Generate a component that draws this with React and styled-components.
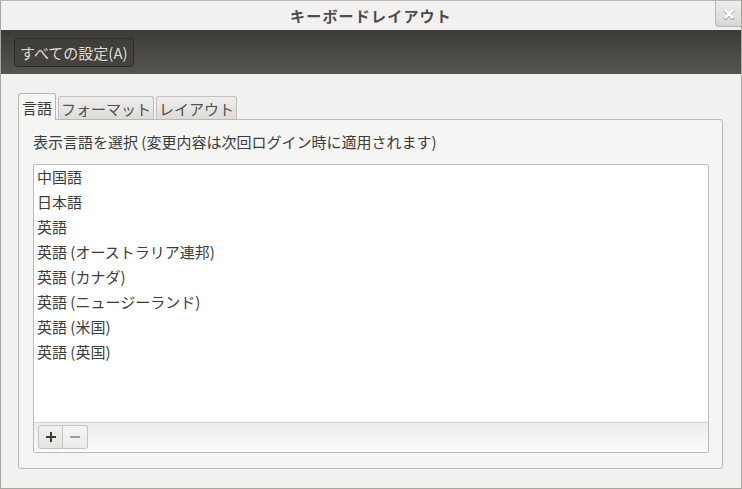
import styled, { createGlobalStyle } from "styled-components";

const GlobalStyle = createGlobalStyle`
  html, body {
    margin: 0;
    padding: 0;
    background: #f2f1f0;
  }
  body {
    font-family: "Noto Sans CJK JP", "Noto Sans", "DejaVu Sans", sans-serif;
  }
`;

const languages = [
  "中国語",
  "日本語",
  "英語",
  "英語 (オーストラリア連邦)",
  "英語 (カナダ)",
  "英語 (ニュージーランド)",
  "英語 (米国)",
  "英語 (英国)",
];

const App = () => {
  return (
    <Window>
      <GlobalStyle />
      <TitleBar>
        <Title>キーボードレイアウト</Title>
        <CloseButton>
          <svg width="12" height="12" viewBox="0 0 12 12">
            <path d="M2.5 2.5 L9.5 9.5 M9.5 2.5 L2.5 9.5" stroke="#8e8c87" strokeWidth="3.2" strokeLinecap="round" transform="translate(0 0.7)" />
            <path d="M2.5 2.5 L9.5 9.5 M9.5 2.5 L2.5 9.5" stroke="#ffffff" strokeWidth="2.6" strokeLinecap="round" />
          </svg>
        </CloseButton>
      </TitleBar>
      <Toolbar>
        <ToolButton>すべての設定(A)</ToolButton>
      </Toolbar>
      <Body>
        <Tabs>
          <Tab active>言語</Tab>
          <Tab>フォーマット</Tab>
          <Tab>レイアウト</Tab>
        </Tabs>
        <Panel>
          <Label>表示言語を選択 (変更内容は次回ログイン時に適用されます)</Label>
          <ListBox>
            <List>
              {languages.map((name) => (
                <Row key={name}>{name}</Row>
              ))}
            </List>
            <ListFooter>
              <Linked>
                <SmallButton dark>
                  <svg width="12" height="12" viewBox="0 0 12 12">
                    <path d="M6 1 V11 M1 6 H11" stroke="#3c3c3c" strokeWidth="2" />
                  </svg>
                </SmallButton>
                <SmallButton>
                  <svg width="12" height="12" viewBox="0 0 12 12">
                    <path d="M1 6 H11" stroke="#a09e9a" strokeWidth="2" />
                  </svg>
                </SmallButton>
              </Linked>
            </ListFooter>
          </ListBox>
        </Panel>
      </Body>
    </Window>
  );
};

const Window = styled.div`
  position: relative;
  width: 742px;
  height: 489px;
  box-sizing: border-box;
  border: 1px solid #a8a7a4;
  border-top-color: #b9b8b5;
  background: #f2f1f0;
  display: flex;
  flex-direction: column;
  overflow: hidden;
`;

const TitleBar = styled.div`
  height: 29px;
  display: flex;
  align-items: center;
  justify-content: center;
  background: #f2f1f0;
`;

const Title = styled.div`
  font-size: 15px;
  font-weight: bold;
  color: #4c4c4c;
  letter-spacing: 1.2px;
`;

const CloseButton = styled.div`
  position: absolute;
  top: 0;
  right: 0;
  width: 26px;
  height: 26px;
  box-sizing: border-box;
  border-left: 1px solid #b6b4af;
  border-bottom: 1px solid #b6b4af;
  border-bottom-left-radius: 4px;
  background: linear-gradient(#eeedeb, #d9d8d4);
  display: flex;
  align-items: center;
  justify-content: center;
`;

const Toolbar = styled.div`
  height: 44px;
  box-sizing: border-box;
  padding: 7px 13px;
  background: linear-gradient(#3b3a36, #56554f);
  display: flex;
  align-items: center;
`;

const ToolButton = styled.div`
  height: 29px;
  box-sizing: border-box;
  padding: 0 5px;
  display: flex;
  align-items: center;
  border: 1px solid #2d2c29;
  border-radius: 3px;
  background: linear-gradient(#3f3e3a, #44433f);
  color: #dfdbd2;
  font-size: 15px;
`;

const Body = styled.div`
  flex: 1;
  padding: 19px 18px 19px 17px;
  display: flex;
  flex-direction: column;
`;

const Tabs = styled.div`
  display: flex;
  align-items: flex-end;
  gap: 2px;
  height: 27px;
  margin-bottom: -1px;
  position: relative;
  z-index: 1;
`;

const Tab = styled.div`
  height: ${(p) => (p.active ? "27px" : "24px")};
  box-sizing: border-box;
  padding: 0 ${(p) => (p.active ? "3px" : "2px")};
  display: flex;
  align-items: center;
  font-size: 15px;
  color: ${(p) => (p.active ? "#3c3c3c" : "#505050")};
  border: 1px solid ${(p) => (p.active ? "#bab8b3" : "#c2c0bb")};
  border-bottom: ${(p) => (p.active ? "none" : "1px solid #bab8b3")};
  border-radius: 3px 3px 0 0;
  background: ${(p) =>
    p.active ? "#f5f5f4" : "linear-gradient(#efeeec, #dedcd9)"};
`;

const Panel = styled.div`
  flex: 1;
  box-sizing: border-box;
  border: 1px solid #bab8b3;
  border-radius: 0 3px 3px 3px;
  background: #f5f5f4;
  padding: 10px 13px 15px 14px;
  display: flex;
  flex-direction: column;
`;

const Label = styled.div`
  font-size: 15px;
  color: #3c3c3c;
  height: 23px;
  line-height: 23px;
  margin-bottom: 11px;
`;

const ListBox = styled.div`
  flex: 1;
  display: flex;
  flex-direction: column;
  border: 1px solid #bdbbb6;
  border-radius: 2px;
  background: #ffffff;
`;

const List = styled.div`
  flex: 1;
`;

const Row = styled.div`
  height: 25px;
  line-height: 23px;
  padding-left: 3px;
  font-size: 15px;
  color: #3c3c3c;
`;

const ListFooter = styled.div`
  height: 30px;
  box-sizing: border-box;
  border-top: 1px solid #d3d1cd;
  background: linear-gradient(#eeedeb, #fafaf9);
  padding: 3px 4px 4px;
  display: flex;
  align-items: center;
`;

const Linked = styled.div`
  display: flex;
`;

const SmallButton = styled.div`
  width: 25px;
  height: 24px;
  box-sizing: border-box;
  display: flex;
  align-items: center;
  justify-content: center;
  border: 1px solid #c6c4bf;
  background: ${(p) =>
    p.dark ? "linear-gradient(#f2f1ef, #e4e3e0)" : "linear-gradient(#f6f5f4, #ecebe9)"};
  border-radius: ${(p) => (p.dark ? "3px 0 0 3px" : "0 3px 3px 0")};
  border-left: ${(p) => (p.dark ? "1px solid #c6c4bf" : "none")};
`;

export default App;
